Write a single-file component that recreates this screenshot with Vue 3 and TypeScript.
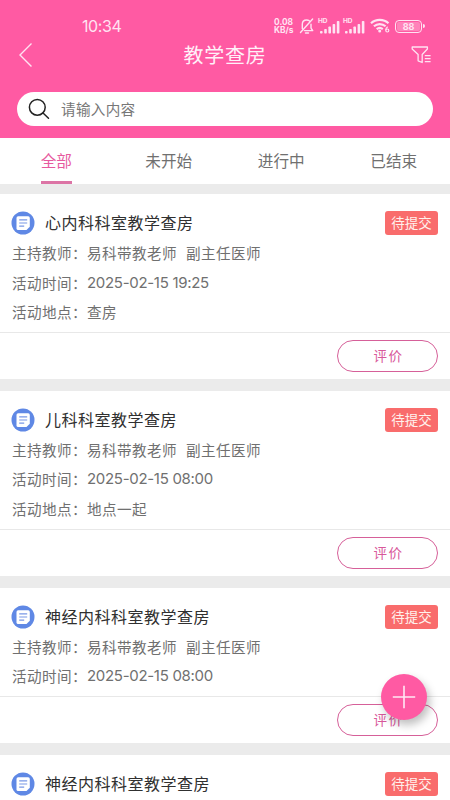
<script setup lang="ts">
import { ref } from 'vue'

interface Round {
  title: string
  teacher: string
  rank: string
  time: string
  place?: string
}

const tabs: string[] = ['全部', '未开始', '进行中', '已结束']
const active = ref(0)
const keyword = ref('')

const rounds: Round[] = [
  { title: '心内科科室教学查房', teacher: '易科带教老师', rank: '副主任医师', time: '2025-02-15 19:25', place: '查房' },
  { title: '儿科科室教学查房', teacher: '易科带教老师', rank: '副主任医师', time: '2025-02-15 08:00', place: '地点一起' },
  { title: '神经内科科室教学查房', teacher: '易科带教老师', rank: '副主任医师', time: '2025-02-15 08:00' },
  { title: '神经内科科室教学查房', teacher: '易科带教老师', rank: '副主任医师', time: '2025-02-15 08:00' },
]
</script>

<template>
  <div class="screen">
    <header class="header">
      <div class="status">
        <span class="clock">10:34</span>
        <div class="indicators">
          <div class="speed"><span>0.08</span><span>KB/s</span></div>
          <svg class="bell" width="16" height="17" viewBox="0 0 16 17" fill="none" stroke="currentColor" stroke-width="1.4" stroke-linecap="round" stroke-linejoin="round">
            <path d="M3.300 10.500V6.200C3.300 3.600 5 2 7.600 2c1.100 0 2 .3 2.700 .8M12 6.200V9.500c0 1.300 1 1.900 1.700 3.100H5.500M1.500 14.500 13.600 1M6.500 15h3" />
          </svg>
          <div v-for="n in 2" :key="n" class="signal">
            <span>HD</span>
            <svg width="22" height="14" viewBox="0 0 22 14" fill="currentColor">
              <rect x="2" y="11" width="2.600" height="2.500" rx=".8" />
              <rect x="6.200" y="9" width="2.600" height="4.500" rx=".8" />
              <rect x="10.400" y="6.500" width="2.600" height="7" rx=".8" />
              <rect x="14.600" y="4" width="2.600" height="9.500" rx=".8" />
              <rect x="18.800" y="1" width="2.600" height="12.500" rx=".8" />
            </svg>
          </div>
          <svg class="wifi" width="21" height="16" viewBox="0 0 21 16" fill="none" stroke="currentColor" stroke-width="2.200">
            <path d="M1 5.300C5.800.8 13.700.8 18.500 5.300M3.900 8.300c3.400-3 8.300-3 11.700 0M6.700 11.100c1.900-1.600 4.200-1.600 6.100 0" />
            <circle cx="9.700" cy="13" r="1.500" fill="currentColor" stroke="none" />
            <path d="M17.700 8.800c-1.500 1-2 2.400-2 3.400" stroke-width="1.200" />
            <circle cx="17.300" cy="12.500" r="1.500" stroke-width="1.200" />
          </svg>
          <div class="battery"><span>88</span></div>
        </div>
      </div>
      <div class="nav">
        <svg class="back" width="16" height="26" viewBox="0 0 16 26" fill="none" stroke="currentColor" stroke-width="1.400">
          <path d="M14.500 1.500 3 13 14.500 24.500" />
        </svg>
        <h1>教学查房</h1>
        <svg class="filter" width="22" height="20" viewBox="0 0 22 20" fill="none" stroke="currentColor" stroke-width="1.300" stroke-linejoin="round">
          <path d="M1.200 2h15.200v2L11.200 9.500v8L7.100 15.800V9.500L1.200 4zM13.800 10.700h5.800M13.800 13.700h5.800M13.800 16.700h5.800" />
        </svg>
      </div>
      <label class="search">
        <svg width="22" height="22" viewBox="0 0 22 22" fill="none" stroke="#222" stroke-width="1.500" stroke-linecap="round">
          <circle cx="9.300" cy="9.300" r="7.900" />
          <path d="m15 15 5.500 5.300" />
        </svg>
        <input v-model="keyword" placeholder="请输入内容" />
      </label>
    </header>

    <nav class="tabs">
      <button v-for="(tab, i) in tabs" :key="tab" :class="{ active: active === i }" @click="active = i">
        <span>{{ tab }}</span>
      </button>
    </nav>

    <main class="list">
      <article v-for="(item, i) in rounds" :key="i" class="card">
        <div class="body">
          <div class="heading">
            <svg width="24" height="24" viewBox="0 0 24 24">
              <circle cx="12" cy="12" r="11.500" fill="#5f88e5" />
              <path d="M7.200 5.200h9.900q1.700 0 1.700 1.700v8.900l-3.300 3.300H7.200q-1.700 0-1.700-1.700V6.900q0-1.700 1.700-1.700z" fill="#fff" />
              <path d="M8.200 8.800h8M8.200 12h8M8.200 15.200h5" stroke="#7898e6" stroke-width="1.200" />
            </svg>
            <h2>{{ item.title }}</h2>
            <span class="tag">待提交</span>
          </div>
          <p><span>主持教师：</span><span>{{ item.teacher }}</span><span class="rank">{{ item.rank }}</span></p>
          <p><span>活动时间：</span><span class="time">{{ item.time }}</span></p>
          <p v-if="item.place"><span>活动地点：</span><span>{{ item.place }}</span></p>
        </div>
        <div class="actions"><button>评价</button></div>
      </article>
    </main>

    <button class="add" aria-label="新增">
      <svg width="24" height="24" viewBox="0 0 24 24" stroke="#ffe9f4" stroke-width="1.600"><path d="M12 .8v22.400M.8 12h22.400" /></svg>
    </button>
  </div>
</template>

<style>
body {
  margin: 0;
  overflow: hidden;
}
</style>

<style scoped>
.screen {
  position: relative;
  width: 450px;
  height: 800px;
  overflow: hidden;
  background: #ebebeb;
  color: #707070;
  font-family: "Noto Sans CJK SC", sans-serif;
}
button {
  padding: 0;
  border: 0;
  background: none;
  font: inherit;
  color: inherit;
}
.header {
  box-sizing: border-box;
  height: 138px;
  padding: 14px 17px 0;
  background: #ff5aa3;
  color: #ffe3f2;
}
.status {
  display: flex;
  justify-content: space-between;
  height: 24px;
  padding: 0 9px 0 65px;
  align-items: center;
}
.clock {
  font: 400 16px/24px Inter, sans-serif;
  letter-spacing: -.4px;
}
.indicators {
  display: flex;
  align-items: center;
}
.speed {
  display: flex;
  flex-direction: column;
  width: 25px;
  font: 700 8.400px/8px Inter, sans-serif;
  white-space: nowrap;
}
.bell {
  margin-right: 3px;
}
.signal {
  display: flex;
  position: relative;
  width: 22px;
  margin-right: 3px;
}
.signal svg {
  margin-top: 1px;
}
.signal span {
  position: absolute;
  left: 0;
  top: -1px;
  font: 700 6.500px/7px Inter, sans-serif;
}
.wifi {
  margin: 0 4px 0 2px;
}
.battery {
  display: flex;
  box-sizing: border-box;
  position: relative;
  width: 27px;
  height: 13px;
  margin-right: 2px;
  padding: 1px;
  border: 1.500px solid currentColor;
  border-radius: 4px;
}
.battery span {
  flex: 1;
  border-radius: 2px;
  background: rgba(255, 255, 255, .25);
  font: 700 9px/9px Inter, sans-serif;
  text-align: center;
}
.battery::after {
  content: "";
  position: absolute;
  right: -4px;
  top: 3px;
  width: 2px;
  height: 4px;
  border-radius: 0 2px 2px 0;
  background: currentColor;
}
.nav {
  display: grid;
  grid-template-columns: 60px 1fr 60px;
  align-items: center;
  height: 34px;
}
.nav h1 {
  margin: -2px 0 0;
  font-size: 20px;
  font-weight: 400;
  letter-spacing: .7px;
  text-align: center;
  color: #fff0f8;
}
.filter {
  justify-self: end;
}
.search {
  display: flex;
  align-items: center;
  box-sizing: border-box;
  height: 34px;
  margin-top: 20px;
  padding: 0 11px;
  border-radius: 17px;
  background: #fff;
}
.search input {
  flex: 1;
  min-width: 0;
  padding: 0;
  margin-left: 11px;
  border: 0;
  outline: 0;
  background: none;
  font: 14.600px/22px "Noto Sans CJK SC", sans-serif;
  letter-spacing: .3px;
}
.search input::placeholder {
  color: #777;
  opacity: 1;
}
.tabs {
  display: grid;
  grid-template-columns: repeat(4, 1fr);
  height: 46px;
  background: #fff;
  font-size: 15.600px;
  letter-spacing: .4px;
}
.tabs button {
  display: flex;
  justify-content: center;
}
.tabs span {
  box-sizing: border-box;
  height: 46px;
  line-height: 44px;
}
.tabs .active span {
  border-bottom: 3px solid #dc74a5;
  color: #e75a9f;
}
.list {
  display: flex;
  flex-direction: column;
  gap: 12px;
  padding-top: 10px;
}
.card {
  background: #fff;
}
.body {
  padding: 14px 12px 5px 12px;
}
.heading {
  display: flex;
  align-items: center;
  height: 30px;
  margin-left: -1px;
}
.heading h2 {
  flex: 1;
  margin: 0 0 0 10px;
  font-size: 16px;
  font-weight: 400;
  line-height: 28px;
  height: 30px;
  letter-spacing: .5px;
  color: #303030;
}
.tag {
  width: 53px;
  height: 24px;
  border-radius: 3px;
  background: #f96c6c;
  color: #fff1ec;
  font-size: 13.500px;
  line-height: 23px;
  text-align: center;
}
.body p {
  display: flex;
  height: 29.600px;
  margin: 0;
  font-size: 14.600px;
  letter-spacing: .4px;
  line-height: 29.600px;
}
.rank {
  margin-left: 9px;
}
.body .time {
  font-family: Inter, sans-serif;
  font-size: 15px;
  letter-spacing: -.3px;
}
.actions {
  display: flex;
  justify-content: flex-end;
  box-sizing: border-box;
  height: 47px;
  padding: 7px 12px 0;
  border-top: 1.500px solid #e8e8e8;
}
.actions button {
  box-sizing: border-box;
  width: 101px;
  height: 32px;
  padding: 0 0 2px 2px;
  border: 1px solid #d66099;
  border-radius: 16px;
  color: #d8589a;
  font-size: 13.500px;
  letter-spacing: 1.500px;
}
.add {
  position: absolute;
  left: 381px;
  top: 674px;
  display: grid;
  place-items: center;
  width: 46px;
  height: 46px;
  border-radius: 50%;
  background: #ff5aa3;
  box-shadow: 3px 5px 8px rgba(0, 0, 0, .25);
}
</style>
